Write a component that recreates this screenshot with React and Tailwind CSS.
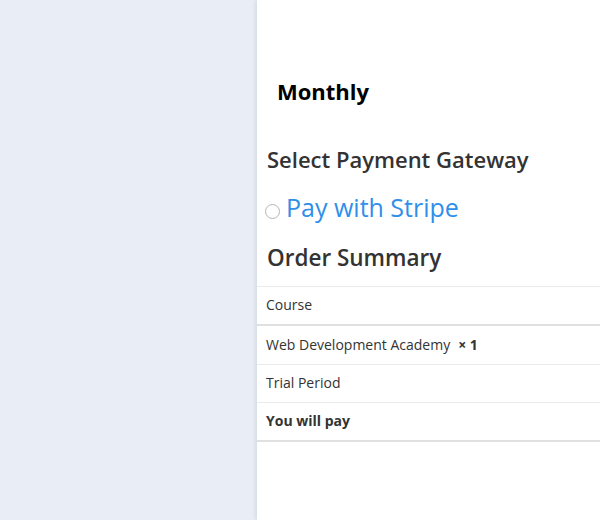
export default function App() {
  const rows = [
    { label: 'Course', thick: true, h: 'h-[39px]' },
    { label: 'Web Development Academy', qty: '× 1', h: 'h-[39px]' },
    { label: 'Trial Period', h: 'h-[38px]' },
    { label: 'You will pay', bold: true, thick: true, h: 'h-[39px]' },
  ];
  return (
    <div
      className="flex h-[520px] w-[600px] overflow-hidden"
      style={{ fontFamily: '"Open Sans", "Noto Sans", sans-serif' }}
    >
      <div className="w-[257px] shrink-0 bg-[#e9eef6]" />
      <div className="flex-1 bg-white shadow-[-2px_0_4px_rgba(0,0,0,0.08)]">
        <div className="pt-[74px] pl-[20px] text-[22px] font-bold leading-[34px] text-black">
          Monthly
        </div>
        <div className="mt-[36px] pl-[10px] text-[22px] font-semibold leading-[30px] text-[#333]">
          Select Payment Gateway
        </div>
        <label className="mt-[18px] flex items-end pl-[8px]">
          <span className="mb-[3px] mr-[6px] h-[15px] w-[15px] rounded-full border border-[#b5b5b5] bg-white" />
          <span className="text-[25px] leading-[30px] text-[#2f8fe9]">Pay with Stripe</span>
        </label>
        <div className="mt-[20px] pl-[10px] text-[22.5px] font-semibold leading-[32px] text-[#333]">
          Order Summary
        </div>
        <div className="mt-[12px] border-t border-[#ebebeb]">
          {rows.map((r) => (
            <div
              key={r.label}
              className={`flex items-center pb-[2px] pl-[9px] text-[14px] text-[#333] ${r.h} ${
                r.thick ? 'border-b-2 border-[#e0e0e0]' : 'border-b border-[#ebebeb]'
              } ${r.bold ? 'font-bold' : ''}`}
            >
              {r.label}
              {r.qty && <span className="ml-[8px] font-bold">{r.qty}</span>}
            </div>
          ))}
        </div>
      </div>
    </div>
  );
}
